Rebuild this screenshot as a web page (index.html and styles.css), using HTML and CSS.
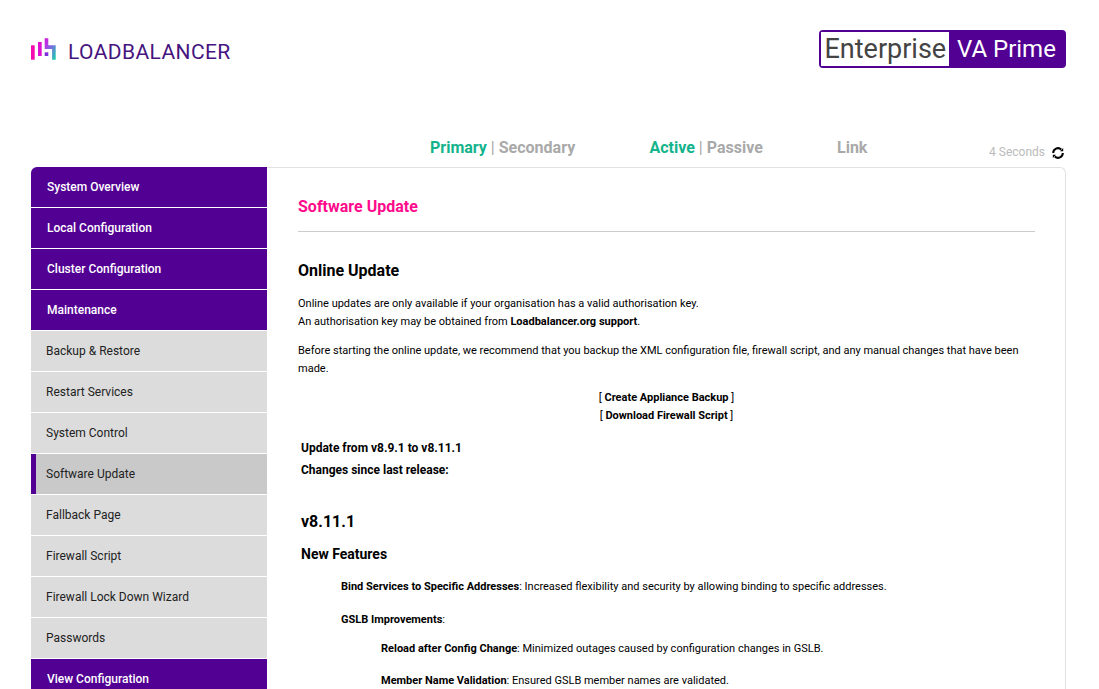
FILE: index.html
```html
<!DOCTYPE html>
<html lang="en">
<head>
    <meta charset="UTF-8">
    <title>Software Update</title>
    <link rel="stylesheet" href="styles.css">
</head>
<body>
<header class="top">
    <div class="logo">
        <svg class="logo-mark" width="25" height="22" viewBox="0 0 25 22">
            <defs>
                <linearGradient id="teal" x1="0" y1="0" x2="1" y2="1">
                    <stop offset="0" stop-color="#e010e0"/>
                    <stop offset="0.5" stop-color="#7c6ae0"/>
                    <stop offset="1" stop-color="#10d8a8"/>
                </linearGradient>
            </defs>
            <rect x="0" y="7.3" width="3.7" height="14.4" fill="#f40cb0"/>
            <rect x="7" y="4" width="3.7" height="14" fill="#e010d0"/>
            <path d="M13.7 .3h3.6v7h7.4v14.4h-3.6v-10.7h-7.4z" fill="url(#teal)"/>
            <rect x="13.7" y="14.3" width="3.6" height="3.7" fill="#8030d8"/>
        </svg>
        <span class="logo-text">LOADBALANCER</span>
    </div>
    <div class="badge">
        <span class="badge-left">Enterprise</span>
        <span class="badge-right">VA Prime</span>
    </div>
</header>

<div class="status">
    <div class="status-group status-role"><b class="on">Primary</b> <i>|</i> <b>Secondary</b></div>
    <div class="status-group status-state"><b class="on">Active</b> <i>|</i> <b>Passive</b></div>
    <div class="status-group status-link"><b>Link</b></div>
    <div class="refresh">
        <span>4 Seconds</span>
        <svg class="refresh-icon" width="14" height="14" viewBox="0 0 14 14" fill="none" stroke="#000" stroke-width="2">
            <path d="M2.2 7a4.8 4.8 0 0 1 8-3.6"/>
            <path d="M11.8 7a4.8 4.8 0 0 1-8 3.6"/>
            <path d="M9 5.2h3.2v-3.2z" fill="#000" stroke="none"/>
            <path d="M5 8.8h-3.2v3.2z" fill="#000" stroke="none"/>
        </svg>
    </div>
</div>

<div class="main">
    <nav class="sidebar">
        <a class="nav-head first">System Overview</a>
        <a class="nav-head">Local Configuration</a>
        <a class="nav-head">Cluster Configuration</a>
        <a class="nav-head">Maintenance</a>
        <a class="nav-item">Backup &amp; Restore</a>
        <a class="nav-item">Restart Services</a>
        <a class="nav-item">System Control</a>
        <a class="nav-item current">Software Update</a>
        <a class="nav-item">Fallback Page</a>
        <a class="nav-item">Firewall Script</a>
        <a class="nav-item">Firewall Lock Down Wizard</a>
        <a class="nav-item">Passwords</a>
        <a class="nav-head">View Configuration</a>
    </nav>
    <section class="panel">
        <h1 class="page-title">Software Update</h1>
        <h2 class="section-title">Online Update</h2>
        <p class="line-first">Online updates are only available if your organisation has a valid authorisation key.<br>
        An authorisation key may be obtained from <b>Loadbalancer.org support</b>.</p>
        <p class="before">Before starting the online update, we recommend that you backup the XML configuration file, firewall script, and any manual changes that have been made.</p>
        <div class="actions">
            <div>[ <b>Create Appliance Backup</b> ]</div>
            <div>[ <b>Download Firewall Script</b> ]</div>
        </div>
        <div class="notes">
            <div class="update-from">Update from v8.9.1 to v8.11.1</div>
            <div class="update-changes">Changes since last release:</div>
            <h3 class="version">v8.11.1</h3>
            <h4 class="features">New Features</h4>
            <p class="indent"><b>Bind Services to Specific Addresses</b>: Increased flexibility and security by allowing binding to specific addresses.</p>
            <p class="indent"><b>GSLB Improvements</b>:</p>
            <p class="indent-2"><b>Reload after Config Change</b>: Minimized outages caused by configuration changes in GSLB.</p>
            <p class="indent-2"><b>Member Name Validation</b>: Ensured GSLB member names are validated.</p>
        </div>
    </section>
</div>
</body>
</html>
```

FILE: styles.css
```css
* {
    box-sizing: border-box;
}
html, body {
    height: 689px;
    overflow: hidden;
}
body {
    margin: 0;
    padding: 0 33px 0 31px;
    background-color: #fff;
    color: #000;
    font-family: Roboto, sans-serif;
    font-size: 11px;
}
.top {
    display: flex;
    justify-content: space-between;
    align-items: flex-start;
    height: 138px;
    padding-top: 30px;
}
.logo {
    display: flex;
    align-items: flex-start;
    gap: 12px;
    margin-top: 8px;
}
.logo-text {
    margin-top: 1px;
    color: #46147f;
    font-family: Roboto, sans-serif;
    font-size: 21px;
    line-height: 26px;
    letter-spacing: 0.4px;
}
.badge {
    display: flex;
    width: 247px;
    height: 38px;
    border: 2px solid #520093;
    border-radius: 4px;
    background-color: #520093;
    line-height: 34px;
    white-space: nowrap;
}
.badge-left {
    flex: none;
    width: 128px;
    padding-left: 3.5px;
    background-color: #fff;
    color: #444;
    font-size: 27px;
}
.badge-right {
    padding-left: 8px;
    color: #fff;
    font-size: 24px;
}
.status {
    display: flex;
    height: 29px;
    padding-left: 399px;
    font-size: 16px;
    line-height: 20px;
    color: #a9a9a9;
}
.status i {
    font-style: normal;
    font-weight: 400;
}
.status .on {
    color: #13b38b;
}
.status-role {
    width: 219.5px;
}
.status-state {
    width: 187.5px;
}
.refresh {
    display: flex;
    gap: 6px;
    margin: 6px 1px 0 auto;
    font-size: 12px;
    line-height: 16px;
    color: #bbb;
}
.refresh-icon {
    margin-top: 2px;
}
.main {
    display: flex;
    align-items: flex-start;
}
.sidebar {
    flex: none;
    width: 236px;
}
.sidebar a {
    display: block;
    height: 41px;
    padding-left: 16px;
    border-bottom: 1px solid #fff;
    font-size: 12px;
    line-height: 40px;
}
.nav-head {
    background-color: #520093;
    color: #fff;
    font-weight: 500;
}
.nav-head.first {
    border-top-left-radius: 6px;
}
.sidebar .nav-item {
    padding-left: 15px;
    background-color: #dcdcdc;
    color: #222;
}
.sidebar .nav-item.current {
    background-color: #c9c9c9;
    box-shadow: inset 5px 0 0 #520093;
}
.panel {
    flex: 1;
    height: 522px;
    padding: 0 30px 0 31px;
    border: 1px solid #e2e2e2;
    border-left: none;
    border-bottom: none;
    border-radius: 0 6px 0 0;
    overflow: hidden;
}
.page-title {
    margin: 0;
    padding: 29px 0 14px;
    border-bottom: 1px solid #ccc;
    color: #ff0a8c;
    font-size: 16px;
    line-height: 20px;
    font-weight: 700;
}
.section-title {
    margin: 29px 0 0;
    font-size: 16px;
    line-height: 20px;
    font-weight: 700;
}
p {
    margin: 0;
    line-height: 18px;
}
.line-first {
    margin-top: 14px;
}
.before {
    margin-top: 11px;
}
.actions {
    margin-top: 11px;
    text-align: center;
    line-height: 18px;
}
.notes {
    padding-left: 3px;
    font-size: 11px;
}
.update-from {
    margin-top: 14px;
    font-size: 12px;
    line-height: 18px;
    font-weight: 700;
}
.update-changes {
    margin-top: 4px;
    font-size: 12px;
    line-height: 18px;
    font-weight: 700;
}
.version {
    margin: 33px 0 0;
    font-size: 16px;
    line-height: 20px;
}
.features {
    margin: 12px 0 0;
    font-size: 14px;
    line-height: 20px;
}
.indent {
    margin: 14px 0 0 40px;
}
.indent + .indent {
    margin-top: 15px;
}
.indent-2 {
    margin: 14px 0 0 80px;
}
.indent + .indent-2 {
    margin-top: 11px;
}
```
